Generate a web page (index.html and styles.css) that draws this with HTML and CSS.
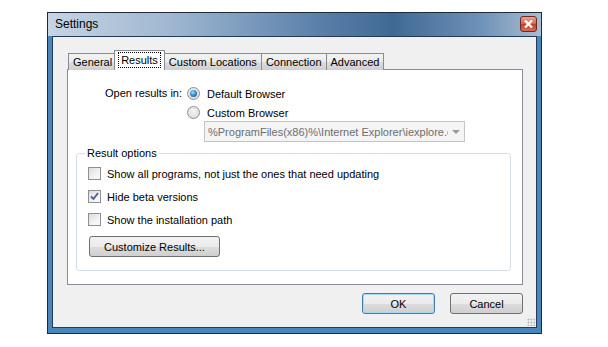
FILE: index.html
```html
<!DOCTYPE html>
<html lang="en">

<head>
    <meta charset="UTF-8">
    <title>Settings</title>
    <link rel="stylesheet" href="styles.css">
</head>

<body>
    <div class="window">
        <div class="titlebar">
            <span class="title">Settings</span>
            <span class="close">
                <svg width="9" height="8" viewBox="0 0 9 8">
                    <path d="M1 0.5 L8 7.5 M8 0.5 L1 7.5" stroke="#fff" stroke-width="2.2" />
                </svg>
            </span>
        </div>

        <div class="client">
            <div class="tabs">
                <div class="tab">General</div>
                <div class="tab active"><span class="focus">Results</span></div>
                <div class="tab">Custom Locations</div>
                <div class="tab">Connection</div>
                <div class="tab">Advanced</div>
            </div>

            <div class="pane">
                <div class="open-row">
                    <span class="open-label">Open results in:</span>
                    <div class="choices">
                        <div class="radio-row"><span class="radio on"></span>Default Browser</div>
                        <div class="radio-row"><span class="radio"></span>Custom Browser</div>
                        <div class="combo">
                            <span class="combo-text">%ProgramFiles(x86)%\Internet Explorer\iexplore.exe</span>
                            <span class="combo-arrow"></span>
                        </div>
                    </div>
                </div>

                <fieldset class="group">
                    <legend>Result options</legend>
                    <div class="check-row"><span class="check"></span>Show all programs, not just the ones that need updating</div>
                    <div class="check-row">
                        <span class="check">
                            <svg width="11" height="11" viewBox="0 0 11 11">
                                <path d="M2 5.5 L4.5 8 L9 2" fill="none" stroke="#4a5f97" stroke-width="1.8" />
                            </svg>
                        </span>
                        Hide beta versions
                    </div>
                    <div class="check-row"><span class="check"></span>Show the installation path</div>
                    <button class="btn btn-wide">Customize Results...</button>
                </fieldset>
            </div>

            <div class="actions">
                <button class="btn btn-default">OK</button>
                <button class="btn">Cancel</button>
            </div>
            <span class="grip"></span>
        </div>
    </div>
</body>

</html>
```

FILE: styles.css
```css
* {
    margin: 0;
    padding: 0;
    box-sizing: border-box;
}

body {
    background: #fff;
    font-family: 'Liberation Sans', Arial, sans-serif;
    font-size: 11px;
    color: #000;
}

/* Window frame */
.window {
    margin: 12px 0 0 47px;
    width: 495px;
    height: 322px;
    border: 1px solid #1c2a3a;
    background: #4a86b9;
}

.titlebar {
    height: 23px;
    display: flex;
    justify-content: space-between;
    align-items: flex-start;
    background: linear-gradient(to right, #c6d4e4 0%, #9fb7d0 25%, #5a80aa 55%, #3f6994 70%, #6f92b8 88%, #a9bdd2 100%);
}

.title {
    font-size: 12px;
    line-height: 23px;
    padding-left: 7px;
}

.close {
    width: 17px;
    height: 16px;
    margin: 3px 4px 0 0;
    border: 1px solid #6b2b22;
    border-radius: 3px;
    background: linear-gradient(#e9a696, #d4614e 50%, #c0402d 51%, #d96c55);
    display: flex;
    justify-content: center;
    align-items: center;
}

.client {
    position: relative;
    margin: 0 4px;
    height: 292px;
    border: 1px solid #243b55;
    background: #f0f0f0;
    padding: 13px 13px 0 14px;
}

/* Tabs */
.tabs {
    display: flex;
    align-items: flex-end;
    height: 20px;
    padding-left: 1px;
    position: relative;
    z-index: 1;
}

.tab {
    height: 17px;
    padding: 0 4px;
    line-height: 16px;
    border: 1px solid #898c95;
    border-bottom: none;
    margin-right: -1px;
    background: linear-gradient(#f3f3f3, #ebebeb 50%, #dddddd 51%, #cfcfcf);
}

.tab.active {
    height: 20px;
    margin: 0 -1px 0 -2px;
    padding: 1px 3px 0;
    background: #fff;
    position: relative;
    z-index: 2;
}

.focus {
    display: inline-block;
    padding: 0 2px;
    line-height: 14px;
    border: 1px dotted #000;
}

.pane {
    width: 456px;
    height: 216px;
    margin-top: -1px;
    border: 1px solid #898c95;
    background: #fff;
    padding: 14px 0 0 37px;
}

/* Browser choice */
.open-row {
    display: flex;
}

.open-label {
    width: 82px;
    line-height: 19px;
}

.radio-row,
.check-row {
    display: flex;
    align-items: center;
    height: 19px;
}

.radio {
    width: 13px;
    height: 13px;
    margin-right: 7px;
    border-radius: 50%;
    border: 1px solid #8e8f8f;
    background: radial-gradient(circle at 50% 40%, #f4f4f4, #d6d6d6);
    display: flex;
    justify-content: center;
    align-items: center;
}

.radio.on::after {
    content: "";
    width: 7px;
    height: 7px;
    border-radius: 50%;
    background: radial-gradient(circle at 40% 35%, #a9dcf6, #2c7fbf 55%, #0f4f86);
}

.combo {
    display: flex;
    align-items: center;
    width: 261px;
    height: 21px;
    margin: -1px 0 0 17px;
    border: 1px solid #c4c4c4;
    background: #f4f4f4;
    color: #6d6d6d;
}

.combo-text {
    flex: 1;
    padding-left: 3px;
    white-space: nowrap;
    overflow: hidden;
    text-overflow: clip;
}

.combo-arrow {
    width: 16px;
    display: flex;
    justify-content: center;
}

.combo-arrow::after {
    content: "";
    border-left: 4px solid transparent;
    border-right: 4px solid transparent;
    border-top: 4px solid #9a9a9a;
}

/* Result options */
.group {
    margin: 5px 11px 0 -29px;
    border: 1px solid #d5dfe5;
    border-radius: 3px;
    padding: 0 12px 12px 11px;
    height: 124px;
}

.group legend {
    margin-left: -3px;
    padding: 0 2px;
    line-height: 13px;
}

.group .check-row {
    height: 23px;
}

.group .check-row:first-of-type {
    margin-top: 2px;
}

.check {
    width: 13px;
    height: 13px;
    margin-right: 6px;
    border: 1px solid #8e8f8f;
    background: linear-gradient(135deg, #dcdcdc, #f6f6f6 70%);
    display: flex;
    justify-content: center;
    align-items: center;
}

/* Buttons */
.btn {
    font-family: 'Liberation Sans', Arial, sans-serif;
    font-size: 11px;
    height: 21px;
    border: 1px solid #707070;
    border-radius: 3px;
    background: linear-gradient(#f2f2f2, #ebebeb 50%, #dddddd 51%, #cfcfcf);
    color: #000;
}

.btn-wide {
    width: 131px;
    margin: 5px 0 0 1px;
}

.btn-default {
    border-color: #3c7fb1;
    box-shadow: inset 0 0 0 1px #a6d8f3;
}

.actions {
    display: flex;
    justify-content: flex-end;
    gap: 15px;
    margin-top: 8px;
}

.actions .btn {
    width: 73px;
}

.grip {
    position: absolute;
    right: 1px;
    bottom: 1px;
    width: 8px;
    height: 8px;
    background: radial-gradient(circle, #b8b8b8 0.8px, transparent 1.2px) 0 0 / 3px 3px;
}
```
